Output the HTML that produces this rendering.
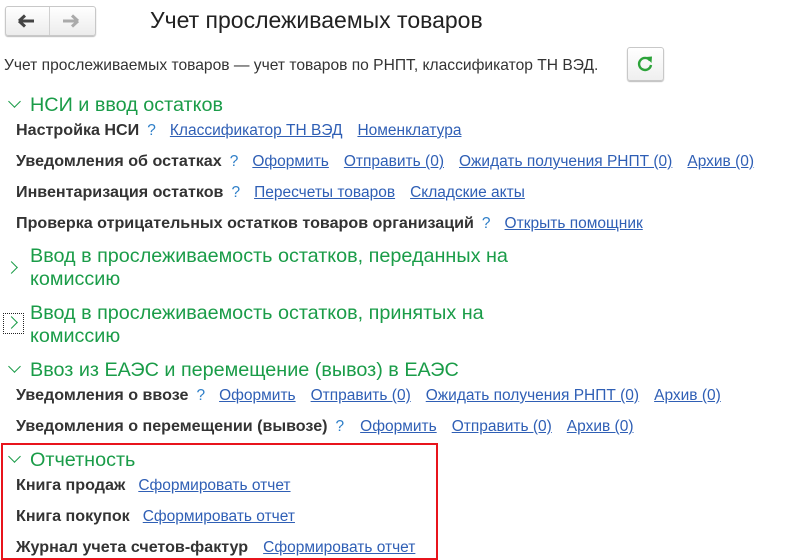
<!DOCTYPE html>
<html><head><meta charset="utf-8"><style>
body{margin:0;width:795px;height:559px;background:#fff;font-family:"Liberation Sans",Arial,sans-serif;position:relative;overflow:hidden;color:#333}
.a{position:absolute;white-space:nowrap;line-height:20px}
.t{font-size:15.5px}
.b{font-weight:bold;color:#333;font-size:16.1px}
a{color:#2f5fb5;text-decoration:underline;margin-left:15px}
.q{color:#2f7fc8;margin-left:8px}
.q+a{margin-left:14px}
.h{font-size:19.8px;color:#1a9c48;line-height:23px}
.chev{position:absolute;width:8px;height:8px;border-right:1.6px solid #1a9c48;border-bottom:1.6px solid #1a9c48}
.down{transform:rotate(45deg)}
.right{transform:rotate(-45deg)}
</style></head><body>
<div style="position:absolute;left:5px;top:6px;width:89px;height:28px;border:1px solid #c8c8c8;border-radius:3px;background:linear-gradient(#fff,#ececec);box-shadow:0 1px 1px #bbb"></div>
<div style="position:absolute;left:49px;top:7px;width:1px;height:28px;background:#d0d0d0"></div>
<svg style="position:absolute;left:17px;top:13px" width="20" height="16"><path d="M2 8H17M2 8L8 2.5M2 8L8 13.5" stroke="#444" stroke-width="3" fill="none"/></svg>
<svg style="position:absolute;left:62px;top:13px" width="20" height="16"><path d="M1 8H16M16 8L10 2.5M16 8L10 13.5" stroke="#aaa" stroke-width="3" fill="none"/></svg>
<div class="a" style="left:150px;top:6px;font-size:23px;line-height:28px;color:#222">Учет прослеживаемых товаров</div>
<div class="a t" style="left:4px;top:56px;color:#333;font-size:15.6px">Учет прослеживаемых товаров — учет товаров по РНПТ, классификатор ТН ВЭД.</div>
<div style="position:absolute;left:627px;top:47px;width:35px;height:32px;border:1px solid #c8c8c8;border-radius:3px;background:linear-gradient(#fff,#efefef);box-shadow:0 1px 1px #bbb"></div>
<svg style="position:absolute;left:636px;top:55px" width="18" height="18"><path d="M14 5.5A6 6 0 1 0 15 10" stroke="#2ca33a" stroke-width="2.4" fill="none"/><path d="M10 2L16 1.5 15.5 8Z" fill="#2ca33a"/></svg>

<div class="chev down" style="left:10px;top:97px"></div>
<div class="a h" style="left:30px;top:94px">НСИ и ввод остатков</div>
<div class="a t" style="left:16px;top:120px"><span class="b">Настройка НСИ</span><span class="q">?</span><a>Классификатор ТН ВЭД</a><a>Номенклатура</a></div>
<div class="a t" style="left:16px;top:151px"><span class="b">Уведомления об остатках</span><span class="q">?</span><a>Оформить</a><a>Отправить (0)</a><a>Ожидать получения РНПТ (0)</a><a>Архив (0)</a></div>
<div class="a t" style="left:16px;top:182px"><span class="b">Инвентаризация остатков</span><span class="q">?</span><a>Пересчеты товаров</a><a>Складские акты</a></div>
<div class="a t" style="left:16px;top:213px"><span class="b">Проверка отрицательных остатков товаров организаций</span><span class="q">?</span><a>Открыть помощник</a></div>

<div class="chev right" style="left:7px;top:263px"></div>
<div class="a h" style="left:30px;top:245px">Ввод в прослеживаемость остатков, переданных на<br>комиссию</div>
<div style="position:absolute;left:3px;top:313px;width:19px;height:19px;border:1px dotted #222"></div>
<div class="chev right" style="left:7px;top:318px"></div>
<div class="a h" style="left:30px;top:302px">Ввод в прослеживаемость остатков, принятых на<br>комиссию</div>

<div class="chev down" style="left:10px;top:362px"></div>
<div class="a h" style="left:30px;top:359px">Ввоз из ЕАЭС и перемещение (вывоз) в ЕАЭС</div>
<div class="a t" style="left:16px;top:385px"><span class="b">Уведомления о ввозе</span><span class="q">?</span><a>Оформить</a><a>Отправить (0)</a><a>Ожидать получения РНПТ (0)</a><a>Архив (0)</a></div>
<div class="a t" style="left:16px;top:416px"><span class="b">Уведомления о перемещении (вывозе)</span><span class="q">?</span><a style="margin-left:16px">Оформить</a><a>Отправить (0)</a><a>Архив (0)</a></div>

<div style="position:absolute;left:1px;top:443px;width:433px;height:113px;border:2px solid #e8141c"></div>
<div class="chev down" style="left:10px;top:452px"></div>
<div class="a h" style="left:30px;top:449px">Отчетность</div>
<div class="a t" style="left:16px;top:475px"><span class="b">Книга продаж</span><a style="margin-left:13px">Сформировать отчет</a></div>
<div class="a t" style="left:16px;top:506px"><span class="b">Книга покупок</span><a style="margin-left:13px">Сформировать отчет</a></div>
<div class="a t" style="left:16px;top:537px"><span class="b">Журнал учета счетов-фактур</span><a style="margin-left:15px">Сформировать отчет</a></div>
</body></html>
